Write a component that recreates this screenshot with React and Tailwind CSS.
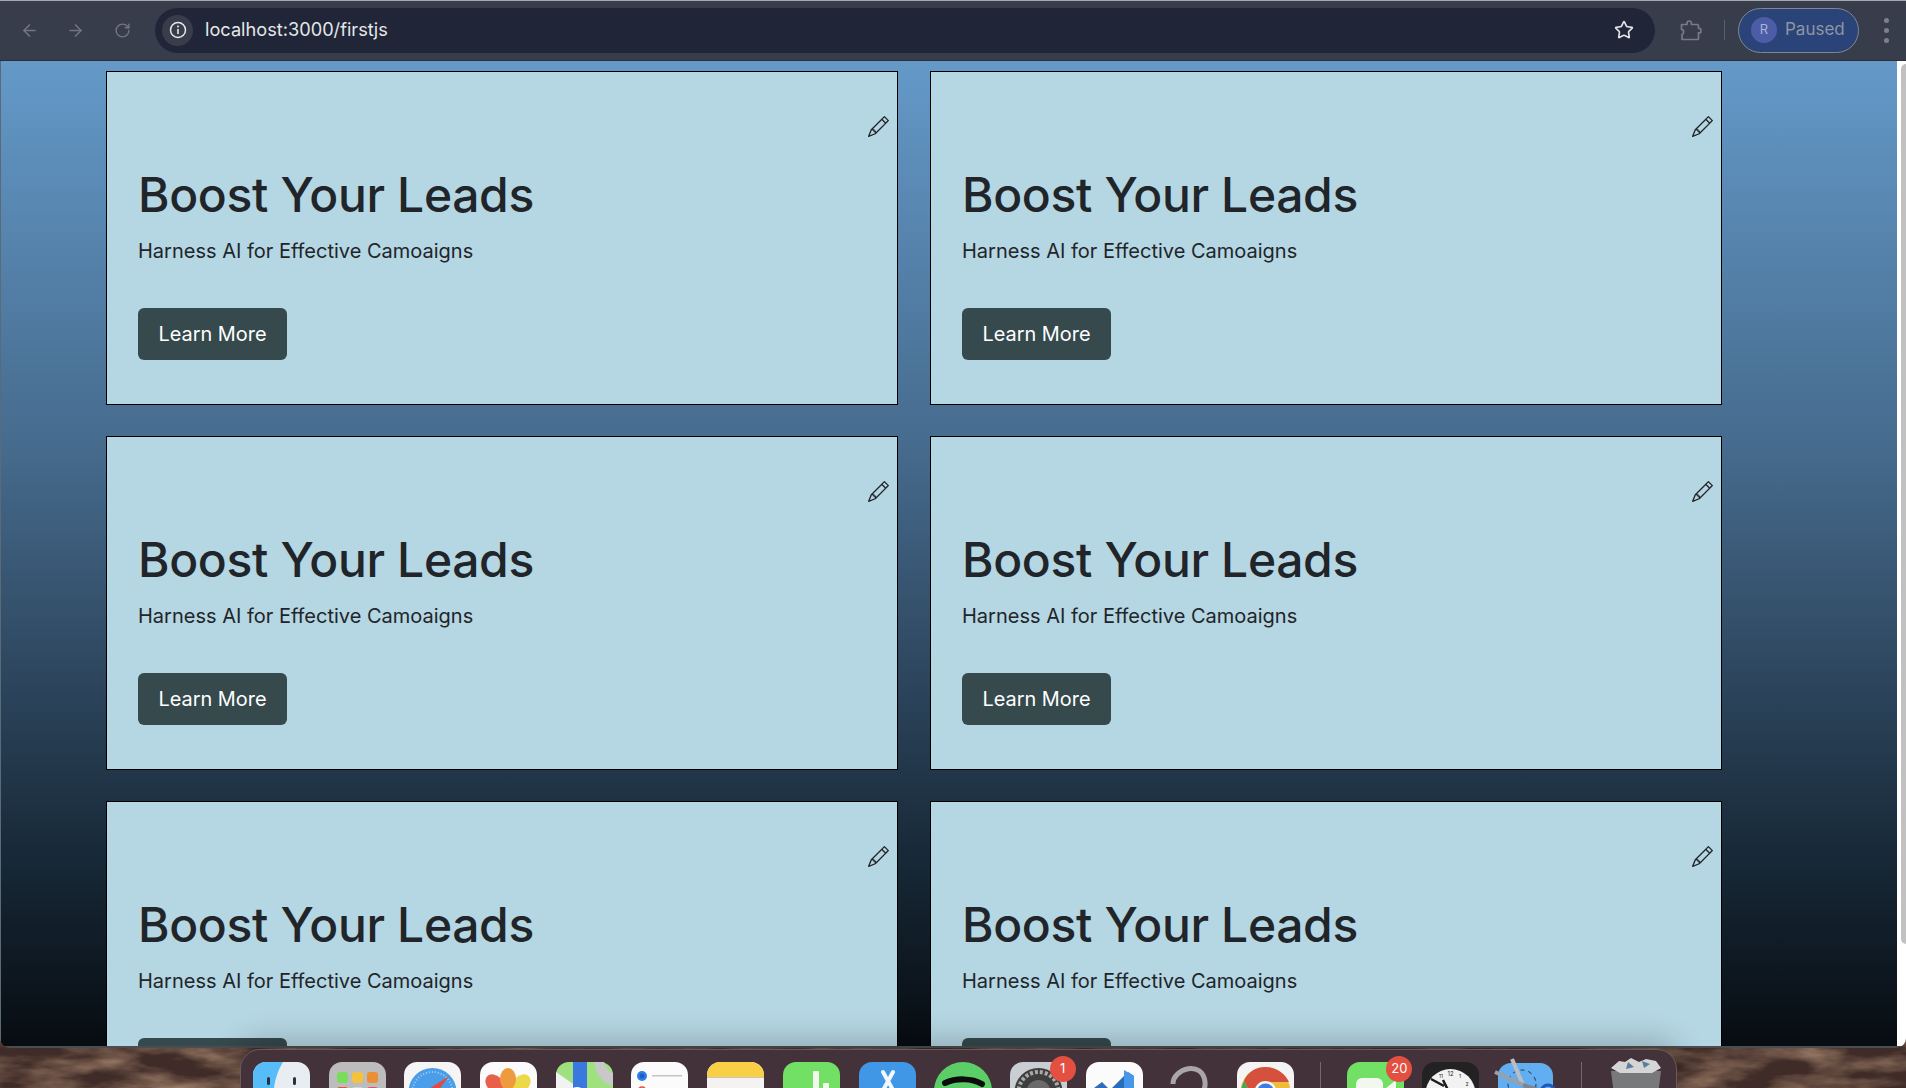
import React from "react";
import { BsPencil } from "react-icons/bs";
import { ArrowLeft, ArrowRight, RotateCw, Star } from "lucide-react";

const cards = [1, 2, 3, 4, 5, 6];

// the dock icons, only the top of each one is on screen
const dockIcons = [
    {
        name: "finder",
        art: (
            <>
                <rect width="57" height="57" rx="13" fill="#e8edf2" />
                <path d="M13 0H30C24 10 21 20 20 36H13C6 36 0 30 0 24V13C0 6 6 0 13 0Z" fill="#56bdf8" />
                <rect x="14" y="15" width="3" height="8" rx="1.5" fill="#26323f" />
                <rect x="40" y="15" width="3" height="8" rx="1.5" fill="#26323f" />
            </>
        ),
    },
    {
        name: "launchpad",
        art: (
            <>
                <rect width="57" height="57" rx="13" fill="#bcbcbc" />
                <rect x="8" y="10" width="11" height="11" rx="3" fill="#79dd5c" />
                <rect x="23" y="10" width="11" height="11" rx="3" fill="#f5c13e" />
                <rect x="38" y="10" width="11" height="11" rx="3" fill="#ec8f33" />
                <rect x="8" y="25" width="11" height="11" rx="3" fill="#ec4a3f" />
                <rect x="23" y="25" width="11" height="11" rx="3" fill="#c5dbe0" />
                <rect x="38" y="25" width="11" height="11" rx="3" fill="#ec4a6a" />
            </>
        ),
    },
    {
        name: "safari",
        art: (
            <>
                <rect width="57" height="57" rx="13" fill="#f5f5f5" />
                <circle cx="28.5" cy="30" r="24" fill="#4a9de8" />
                <circle cx="28.5" cy="30" r="20" fill="none" stroke="#a9d2f4" strokeWidth="2" strokeDasharray="1 2" />
                <path d="M45 14L25 27L31 33Z" fill="#e5483c" />
            </>
        ),
    },
    {
        name: "photos",
        art: (
            <>
                <rect width="57" height="57" rx="13" fill="#fbfbfb" />
                <ellipse cx="46" cy="34" rx="8" ry="11" fill="#a5cf5c" transform="rotate(90 46 34)" />
                <ellipse cx="10" cy="34" rx="8" ry="11" fill="#c070b0" transform="rotate(90 10 34)" />
                <ellipse cx="41" cy="22" rx="8" ry="11" fill="#ecd94a" transform="rotate(45 41 22)" />
                <ellipse cx="15" cy="22" rx="8" ry="11" fill="#e8604c" transform="rotate(-45 15 22)" />
                <ellipse cx="28" cy="17" rx="8" ry="11" fill="#ee9a3e" />
            </>
        ),
    },
    {
        name: "maps",
        art: (
            <>
                <rect width="57" height="57" rx="13" fill="#9fe07f" />
                <path d="M0 10L20 24V57H0Z" fill="#f2f2f2" />
                <rect x="17" y="0" width="14" height="30" fill="#3a78e0" />
                <path d="M38 0C40 14 48 22 57 24V11C52 9 49 5 48 0Z" fill="#c8c8c8" />
                <circle cx="21" cy="34" r="9" fill="#fff" />
                <circle cx="21" cy="34" r="5" fill="#3a78e0" />
            </>
        ),
    },
    {
        name: "reminders",
        art: (
            <>
                <rect width="57" height="57" rx="13" fill="#fbfbfb" />
                <circle cx="11" cy="14" r="5" fill="#2f7de6" />
                <circle cx="11" cy="14" r="2.5" fill="#1c5fc4" />
                <rect x="21" y="13" width="30" height="1.5" fill="#c4c4c4" />
                <circle cx="11" cy="29" r="4" fill="none" stroke="#e5483c" strokeWidth="1.5" />
            </>
        ),
    },
    {
        name: "notes",
        art: (
            <>
                <rect width="57" height="57" rx="13" fill="#f4f3f1" />
                <path d="M0 15V13C0 6 6 0 13 0H44C51 0 57 6 57 13V15Z" fill="#f9cf45" />
                <rect y="15" width="57" height="1" fill="#c9c7c2" />
            </>
        ),
    },
    {
        name: "numbers",
        art: (
            <>
                <rect width="57" height="57" rx="13" fill="#71e065" />
                <rect x="30" y="9" width="6" height="48" rx="1" fill="#f2f8ee" />
                <rect x="40" y="21" width="6" height="36" rx="1" fill="#f2f8ee" />
            </>
        ),
    },
    {
        name: "appstore",
        art: (
            <>
                <rect width="57" height="57" rx="13" fill="#3f97e6" />
                <path d="M24 10L34 28M34 10L22 32" stroke="#f3f8fd" strokeWidth="4" strokeLinecap="round" />
            </>
        ),
    },
    {
        name: "spotify",
        art: (
            <>
                <circle cx="29" cy="29" r="29" fill="#5bce68" />
                <path d="M11 21C22 16 38 16 48 22" fill="none" stroke="#0c0c0c" strokeWidth="6" strokeLinecap="round" />
            </>
        ),
    },
    {
        name: "settings",
        art: (
            <>
                <rect width="57" height="57" rx="13" fill="#c9ced3" />
                <circle cx="28.5" cy="30" r="24" fill="#3e3e3e" />
                <circle cx="28.5" cy="30" r="20" fill="none" stroke="#a9a9a9" strokeWidth="4" strokeDasharray="3 2" />
                <circle cx="28.5" cy="30" r="12" fill="#6a6a6a" />
            </>
        ),
    },
    {
        name: "vscode",
        art: (
            <>
                <rect width="57" height="57" rx="13" fill="#fbfbfb" />
                <path d="M8 26L16 20L24 28L42 10L48 14V50L42 54L24 36L16 44L8 38Z" fill="#2b6db8" />
                <path d="M38 8L48 14V50L38 56Z" fill="#4696ea" />
            </>
        ),
    },
    {
        name: "hook",
        art: <path d="M12 22C12 6 42 -2 44 20C45 30 38 34 33 44" fill="none" stroke="#a9a5a9" strokeWidth="5" />,
    },
    {
        name: "chrome",
        art: (
            <>
                <rect width="57" height="57" rx="13" fill="#f4f4f4" />
                <circle cx="28.5" cy="30" r="25" fill="#edbe3e" />
                <path d="M28.5 5C18 5 10 11 7 19L18 38L28.5 20H52C48 11 39 5 28.5 5Z" fill="#d6503e" />
                <path d="M7 19C0 32 6 48 20 54L30 38L18 38Z" fill="#4aa45a" />
                <circle cx="28.5" cy="30" r="11" fill="#f4f4f4" />
                <circle cx="28.5" cy="30" r="8.5" fill="#3f7de0" />
            </>
        ),
    },
    { name: "divider" },
    {
        name: "facetime",
        art: (
            <>
                <rect width="57" height="57" rx="13" fill="#71e065" />
                <rect x="9" y="16" width="27" height="26" rx="6" fill="#f2f8ee" />
                <path d="M39 26L49 18V40L39 32Z" fill="#f2f8ee" />
            </>
        ),
    },
    {
        name: "clock",
        art: (
            <>
                <rect width="57" height="57" rx="13" fill="#222222" />
                <circle cx="28.5" cy="32" r="25" fill="#f2f2f2" />
                <path d="M9 17L22 24M21 18L28 32" stroke="#1b1b1b" strokeWidth="2.5" />
                <text x="28.5" y="14" fontSize="6" textAnchor="middle" fontFamily="Inter, sans-serif" fill="#1b1b1b">12</text>
                <text x="38" y="16" fontSize="5" textAnchor="middle" fontFamily="Inter, sans-serif" fill="#1b1b1b">1</text>
                <text x="45" y="24" fontSize="5" textAnchor="middle" fontFamily="Inter, sans-serif" fill="#1b1b1b">2</text>
                <text x="19" y="16" fontSize="5" textAnchor="middle" fontFamily="Inter, sans-serif" fill="#1b1b1b">11</text>
            </>
        ),
    },
    {
        name: "scissors",
        art: (
            <>
                <rect y="1" width="55" height="56" rx="13" fill="#62aef0" />
                <circle cx="24" cy="22" r="14" fill="none" stroke="#1d3550" strokeWidth="1" strokeDasharray="4 4" />
                <path d="M14 -3L25 23" stroke="#b9bec5" strokeWidth="4" />
                <path d="M-3 10L25 23" stroke="#9aa0a8" strokeWidth="4" />
                <path d="M25 23L44 29" stroke="#7f858d" strokeWidth="4" />
                <circle cx="50" cy="30" r="7" fill="none" stroke="#2157b8" strokeWidth="3" />
            </>
        ),
    },
    { name: "divider" },
    {
        name: "trash",
        art: (
            <>
                <path d="M3 9L53 9L47 57H9Z" fill="#77797b" />
                <path d="M3 6L11 -1L17 0L23 -4L31 0L38 -3L48 -1L53 6L44 11L12 11Z" fill="#d5d5d5" />
                <path d="M20 0L26 5L18 7ZM34 -1L42 2L36 6Z" fill="#5a7f9c" />
            </>
        ),
    },
];

const Card = () => {
    return (
        <div className="relative h-[334px] border border-black bg-[#b5d6e3] px-[31px] pt-[94px] text-[#212529]">
            <BsPencil className="absolute top-[44px] right-[8px] text-[21px]" />
            <h1 className="text-[48px] leading-[58px] font-medium tracking-[-0.35px]">Boost Your Leads</h1>
            <p className="mt-[12px] text-[20px] leading-[30px]">Harness AI for Effective Camoaigns</p>
            <button className="mt-[42px] block h-[52px] w-[149px] rounded-md bg-[#36494d] pt-[2px] text-[19.9px] text-white">
                Learn More
            </button>
        </div>
    );
};

const App = () => {
    return (
        <div className="relative h-screen overflow-hidden bg-[#3f2b27] font-['Inter',sans-serif]">
            {/* Wallpaper */}
            <svg className="absolute inset-0 h-full w-full" xmlns="http://www.w3.org/2000/svg">
                <filter id="rust">
                    <feTurbulence type="fractalNoise" baseFrequency="0.015 0.05" numOctaves="4" seed="7" />
                    <feColorMatrix values="0 0 0 0 0.42  0 0 0 0 0.26  0 0 0 0 0.17  1.6 0 0 0 -0.55" />
                </filter>
                <rect width="100%" height="100%" filter="url(#rust)" />
            </svg>

            <div className="relative flex h-[1048px] flex-col overflow-hidden rounded-b-[10px]">
                {/* Browser bar */}
                <div className="flex h-[61px] shrink-0 items-center border-t border-t-[#a6a8ad] border-b border-b-[#2b2f3b] bg-[#383d4c] pb-[1px] pl-[20px] pr-[17px] text-[#71767f]">
                    <ArrowLeft size={19} />
                    <ArrowRight size={19} className="ml-[27px]" />
                    <RotateCw size={17} className="ml-[29px]" />
                    <div className="ml-[24px] flex h-[45px] flex-1 items-center rounded-full bg-[#202637] pl-[7px] pr-[21px]">
                        <div className="flex h-[31px] w-[31px] items-center justify-center rounded-full bg-[#383d4c]">
                            <svg width="18" height="18" viewBox="0 0 18 18" fill="none">
                                <circle cx="9" cy="9" r="7.5" stroke="#e8e9ec" strokeWidth="1.5" />
                                <path d="M9 8V13" stroke="#e8e9ec" strokeWidth="1.6" />
                                <circle cx="9" cy="5.5" r="1" fill="#e8e9ec" />
                            </svg>
                        </div>
                        <span className="ml-[12px] text-[18.2px] text-[#e5e7ea]">localhost:3000/firstjs</span>
                        <Star size={20} strokeWidth={2} className="ml-auto text-[#e0e2e6]" />
                    </div>
                    <svg width="22" height="21" viewBox="0 0 22 21" fill="none" className="ml-[25px]">
                        <path d="M1.5 4.5H7V3.2a2.2 2.2 0 0 1 4.4 0V4.5H17.5a1 1 0 0 1 1 1V8.5H20a0.8 0.8 0 0 1 .8.8V12a.8.8 0 0 1-.8.8H18.5V18.5a1 1 0 0 1-1 1H2V14.5a2.6 2.6 0 0 0 1.6-2.6A2.6 2.6 0 0 0 1.5 9.4Z" stroke="#767b85" strokeWidth="1.7" strokeLinejoin="round" />
                    </svg>
                    <div className="ml-[22px] h-[20px] w-px bg-[#5a5f6b]" />
                    <div className="ml-[13px] flex h-[45px] w-[121px] items-center rounded-full border border-[#82868f] bg-[#2a4479] pl-[12px]">
                        <div className="flex h-[26px] w-[26px] items-center justify-center rounded-full bg-[#4c5ca6] text-[13px] text-[#aab3d6]">R</div>
                        <span className="ml-[8px] text-[17px] text-[#8f95a3]">Paused</span>
                    </div>
                    <div className="ml-[25px] flex flex-col gap-[5px]">
                        <div className="h-[5px] w-[5px] rounded-full bg-[#7d818b]" />
                        <div className="h-[5px] w-[5px] rounded-full bg-[#7d818b]" />
                        <div className="h-[5px] w-[5px] rounded-full bg-[#7d818b]" />
                    </div>
                </div>

                {/* Page */}
                <div className="flex min-h-0 flex-1">
                    <div className="flex-1 overflow-hidden border-l border-l-[#5b6a78] bg-[linear-gradient(180deg,#6499c8,#456a8c_40%,#304a63_60%,#182a39_80%,#070c11)] pt-[10px] pl-[105px]">
                        <div className="grid w-[1616px] grid-cols-2 gap-x-[32px] gap-y-[31px]">
                            {cards.map((card) => (
                                <Card key={card} />
                            ))}
                        </div>
                    </div>
                    <div className="flex w-[9px] shrink-0 justify-end bg-white pt-[3px]">
                        <div className="h-[880px] w-[5px] rounded-l-full bg-[#c1c1c1]" />
                    </div>
                </div>
                <div className="h-[2px] shrink-0 bg-[#4a4e52]" />
            </div>

            {/* Dock */}
            <div className="relative ml-[240px] mt-[1px] flex h-[60px] w-[1437px] items-start gap-[19px] rounded-t-[20px] border border-[#6b5a5c] bg-[#44323a] pl-[12px] pt-[12px] shadow-[0_-8px_30px_rgba(0,0,0,0.22)]">
                {dockIcons.map((icon, i) =>
                    icon.name === "divider" ? (
                        <div key={i} className="mx-[7px] h-[40px] w-px bg-[#75686c]" />
                    ) : (
                        <div key={i} className="relative h-[57px] w-[56.7px] shrink-0">
                            <svg width="57" height="57" viewBox="0 0 57 57" className="overflow-visible">{icon.art}</svg>
                            {icon.name === "settings" && (
                                <div className="absolute -top-[6px] -right-[9px] flex h-[26px] w-[26px] items-center justify-center rounded-full bg-[#e34f40] text-[13px] text-white">1</div>
                            )}
                            {icon.name === "facetime" && (
                                <div className="absolute -top-[6px] -right-[9px] flex h-[26px] w-[26px] items-center justify-center rounded-full bg-[#e34f40] text-[13px] text-white">20</div>
                            )}
                        </div>
                    )
                )}
            </div>
        </div>
    );
};

export default App;
